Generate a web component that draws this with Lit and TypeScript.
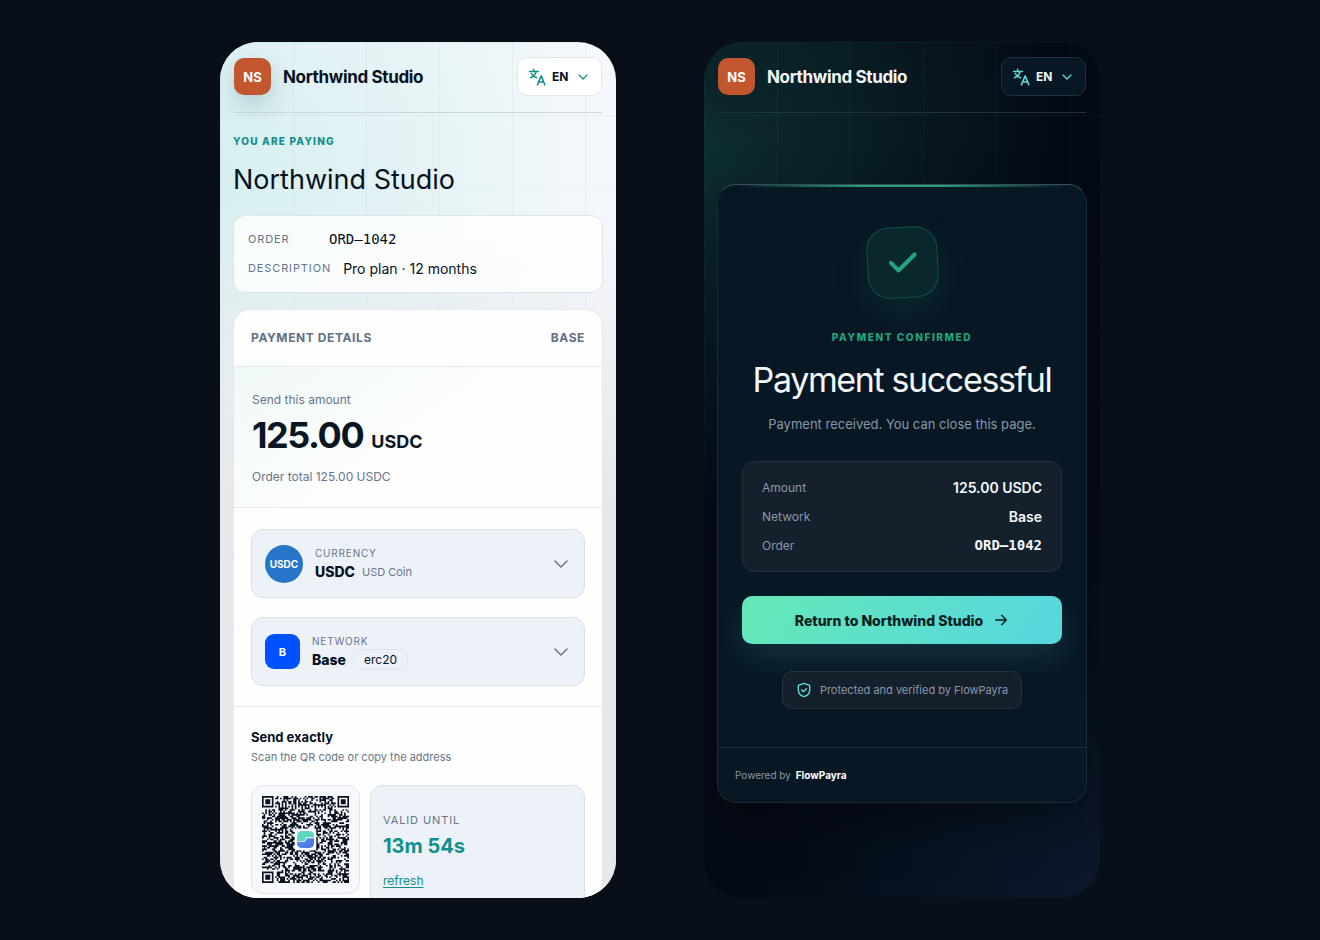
import { LitElement, html, css, svg } from "lit";
import { customElement, property } from "lit/decorators.js";

const shared = css`
  *,
  *::before,
  *::after {
    box-sizing: border-box;
  }
  h1,
  h2,
  p,
  dl,
  dd {
    margin: 0;
  }
  svg {
    display: block;
    flex: none;
  }
  button,
  select {
    font: inherit;
    color: inherit;
  }
`;

/** Faint square grid that fades out towards the lower half of a screen. */
const grid = css`
  :host {
    display: block;
    position: relative;
    isolation: isolate;
  }
  :host::before {
    content: "";
    position: absolute;
    inset: 0;
    z-index: -1;
    background:
      linear-gradient(90deg, transparent 72px, var(--grid) 72px) 1px 0 / 73px 73px,
      linear-gradient(transparent 72px, var(--grid) 72px) 0 1px / 73px 73px;
    mask-image: linear-gradient(#000, transparent 640px);
  }
`;

const chevron = (size: number, width: number) => html`
  <svg width=${size} height=${size} viewBox="0 0 24 24" fill="none" stroke="currentColor"
    stroke-width=${width} stroke-linecap="round" stroke-linejoin="round" aria-hidden="true">
    <path d="m4 8 8 8 8-8"></path>
  </svg>
`;

const QR_SIZE = 53;

/** Builds the dark modules of the payment code as one path. */
function qrPath(): string {
  const n = QR_SIZE;
  let seed = 104233;
  const next = () => {
    seed = (seed * 1103515245 + 12345) % 2147483648;
    return seed / 2147483648;
  };
  const finder = (x: number, y: number): boolean | null => {
    for (const [ox, oy] of [[0, 0], [n - 7, 0], [0, n - 7]]) {
      const dx = x - ox;
      const dy = y - oy;
      if (dx >= -1 && dx <= 7 && dy >= -1 && dy <= 7) {
        const d = Math.max(Math.abs(dx - 3), Math.abs(dy - 3));
        return d === 3 || d <= 1;
      }
    }
    return null;
  };
  let path = "";
  for (let y = 0; y < n; y++) {
    for (let x = 0; x < n; x++) {
      const fixed = finder(x, y);
      const dark = next() < 0.52;
      const centre = Math.max(Math.abs(x - 26), Math.abs(y - 26)) <= 6;
      const on = fixed ?? (x === 6 || y === 6 ? (x + y) % 2 === 0 : dark);
      if (on && !centre) path += `M${x} ${y}h1v1h-1z`;
    }
  }
  return path;
}

@customElement("pay-header")
export class PayHeader extends LitElement {
  static styles = [
    shared,
    css`
      :host {
        display: block;
        padding: 0 14px;
      }
      .bar {
        display: flex;
        align-items: center;
        padding: 15px 0 16px;
        border-bottom: 1px solid var(--rule);
      }
      .logo {
        display: grid;
        place-items: center;
        width: 37px;
        height: 37px;
        border-radius: 10px;
        background: #c2562f;
        color: #fff;
        font-size: 13px;
        font-weight: 700;
        box-shadow: 0 10px 24px var(--logo-shadow);
      }
      .name {
        margin-left: 12px;
        font-size: 17px;
        line-height: 24px;
        font-weight: 700;
        letter-spacing: -0.02em;
      }
      .lang {
        display: flex;
        align-items: center;
        height: 39px;
        margin-left: auto;
        padding: 0 12px 0 10px;
        border: 1px solid var(--control-border);
        border-radius: 10px;
        background: var(--control);
        color: var(--accent);
      }
      .lang select {
        width: 25px;
        margin-left: 6px;
        padding: 0;
        border: 0;
        background: none;
        appearance: none;
        color: var(--text);
        font-size: 12px;
        line-height: 18px;
        font-weight: 700;
      }
    `,
  ];

  render() {
    return html`
      <header class="bar">
        <span class="logo">NS</span>
        <span class="name">Northwind Studio</span>
        <label class="lang">
          <svg width="18" height="18" viewBox="0 0 24 24" fill="none" stroke="currentColor"
            stroke-width="2" stroke-linecap="round" stroke-linejoin="round" aria-hidden="true">
            <path d="M2 4.500h12M7.500 1.500v3M3.500 13c3.500-1.500 6.500-4.500 7.500-8.500M4.500 7.500c1.500 2.500 4 4.500 7 5.500"></path>
            <path d="m12.500 22.500 5-12 5 12M14.200 18.500h6.600"></path>
          </svg>
          <select aria-label="Language">
            <option>EN</option>
            <option>DE</option>
            <option>ES</option>
          </select>
          ${chevron(12, 2.4)}
        </label>
      </header>
    `;
  }
}

@customElement("pay-option")
export class PayOption extends LitElement {
  @property() label = "";
  @property() value = "";
  @property() badge = "";
  @property() kind = "coin";

  static styles = [
    shared,
    css`
      :host {
        display: block;
      }
      .option {
        display: flex;
        align-items: center;
        gap: 12px;
        width: 100%;
        min-height: 69px;
        padding: 0 14px 0 13px;
        border: 1px solid #d7e0e6;
        border-radius: 12px;
        background: #edf2f9;
        color: #68758b;
        text-align: left;
      }
      .mark {
        display: grid;
        place-items: center;
        flex: none;
        color: #fff;
        font-weight: 700;
      }
      .coin {
        width: 38px;
        height: 38px;
        border-radius: 50%;
        background: #2775ca;
        font-size: 10px;
      }
      .chain {
        width: 35px;
        height: 35px;
        border-radius: 9px;
        background: #0052ff;
        font-size: 11px;
      }
      .text {
        flex: 1;
      }
      .label {
        display: block;
        font-size: 10px;
        line-height: 16px;
        letter-spacing: 0.08em;
        text-transform: uppercase;
      }
      .row {
        display: flex;
        align-items: center;
        gap: 7px;
        height: 22px;
        font-size: 11px;
      }
      .value {
        color: #07111f;
        font-size: 14px;
        font-weight: 800;
      }
    `,
  ];

  render() {
    return html`
      <button class="option" type="button" aria-haspopup="listbox">
        <span class="mark ${this.kind}">${this.badge}</span>
        <span class="text">
          <span class="label">${this.label}</span>
          <span class="row"><span class="value">${this.value}</span><slot></slot></span>
        </span>
        ${chevron(18, 2)}
      </button>
    `;
  }
}

@customElement("pay-checkout")
export class PayCheckout extends LitElement {
  static styles = [
    shared,
    grid,
    css`
      :host {
        --text: #07111f;
        --accent: #108f8d;
        --rule: #ccd8dc;
        --control: #ffffff;
        --control-border: #dfe7eb;
        --logo-shadow: rgb(20 70 80 / 20%);
        --grid: rgb(60 90 120 / 5%);
        color: var(--text);
        background:
          linear-gradient(transparent 160px, #e7e8ec 460px),
          radial-gradient(400px 440px at 0 140px, #d6eff0, rgb(214 239 240 / 0%)),
          #f5f8fc;
      }
      .page {
        padding: 20px 13px;
      }
      .eyebrow {
        color: var(--accent);
        font-size: 10px;
        line-height: 16px;
        font-weight: 800;
        letter-spacing: 0.12em;
        text-transform: uppercase;
      }
      .title {
        margin-top: 13px;
        font-size: 27px;
        line-height: 36px;
        font-weight: 400;
      }
      .facts {
        margin-top: 17px;
        padding: 9px 14px;
        border: 1px solid #dce6ea;
        border-radius: 12px;
        background: rgb(255 255 255 / 80%);
      }
      .fact {
        display: flex;
        gap: 12px;
        line-height: 29px;
      }
      .fact dt {
        min-width: 69px;
        color: #68758b;
        font-size: 11px;
        letter-spacing: 0.08em;
        text-transform: uppercase;
      }
      .fact dd {
        font-size: 14px;
      }
      .fact .mono {
        font-family: "DejaVu Sans Mono", monospace;
      }
      .card {
        margin-top: 16px;
        border: 1px solid #e3e9ee;
        border-radius: 17px;
        background: #fefefe;
        overflow: hidden;
      }
      .head {
        display: flex;
        justify-content: space-between;
        padding: 19px 17px;
        border-bottom: 1px solid #e5eaee;
        color: #637087;
        font-size: 12px;
        line-height: 18px;
        font-weight: 700;
        letter-spacing: 0.05em;
        text-transform: uppercase;
      }
      .amount {
        padding: 23px 18px 20px;
        border-bottom: 1px solid #e5eaee;
        background: linear-gradient(145deg, #f0f9f8, #fefefe 55%);
        color: #68758b;
        font-size: 12px;
        line-height: 20px;
      }
      .sum {
        display: flex;
        align-items: baseline;
        gap: 8px;
        margin: 5px 0 12px;
        color: #0b1624;
        font-size: 36px;
        line-height: 40px;
        font-weight: 700;
        letter-spacing: -0.04em;
      }
      .unit {
        font-size: 18px;
        line-height: 20px;
        font-weight: 700;
        letter-spacing: 0;
      }
      .options {
        display: grid;
        gap: 19px;
        padding: 21px 17px 20px;
        border-bottom: 1px solid #e5eaee;
      }
      .tag {
        padding: 0 10px;
        border: 1px solid #dfe5ec;
        border-radius: 10px;
        color: #07111f;
        font-size: 12px;
        line-height: 19px;
      }
      .send {
        padding: 20px 17px;
      }
      .send h2 {
        font-size: 13px;
        line-height: 20px;
        font-weight: 700;
      }
      .hint {
        color: #68758b;
        font-size: 11px;
        line-height: 20px;
      }
      .transfer {
        display: flex;
        gap: 10px;
        margin-top: 18px;
      }
      .qr {
        align-self: flex-start;
        padding: 10px;
        border: 1px solid #dfe5eb;
        border-radius: 12px;
        background: #f6f8fb;
      }
      .valid {
        flex: 1;
        padding: 25px 12px 28px;
        border: 1px solid #d7e0e6;
        border-radius: 12px;
        background: #edf2f9;
        color: #68758b;
      }
      .valid .label {
        font-size: 11px;
        line-height: 18px;
        letter-spacing: 0.08em;
        text-transform: uppercase;
      }
      .time {
        margin: 3px 0 11px;
        color: var(--accent);
        font-size: 20px;
        line-height: 28px;
        font-weight: 700;
      }
      .refresh {
        display: block;
        width: fit-content;
        color: var(--accent);
        font-size: 12px;
        line-height: 20px;
        text-underline-offset: 2px;
      }
    `,
  ];

  render() {
    return html`
      <pay-header></pay-header>
      <main class="page">
        <p class="eyebrow">You are paying</p>
        <h1 class="title">Northwind Studio</h1>
        <dl class="facts">
          <div class="fact"><dt>Order</dt><dd class="mono">ORD–1042</dd></div>
          <div class="fact"><dt>Description</dt><dd>Pro plan · 12 months</dd></div>
        </dl>
        <section class="card">
          <div class="head"><span>Payment details</span><span>Base</span></div>
          <div class="amount">
            <p>Send this amount</p>
            <p class="sum">125.00 <span class="unit">USDC</span></p>
            <p>Order total 125.00 USDC</p>
          </div>
          <div class="options">
            <pay-option label="Currency" value="USDC" badge="USDC" kind="coin">USD Coin</pay-option>
            <pay-option label="Network" value="Base" badge="B" kind="chain"><span class="tag">erc20</span></pay-option>
          </div>
          <div class="send">
            <h2>Send exactly</h2>
            <p class="hint">Scan the QR code or copy the address</p>
            <div class="transfer">
              <div class="qr">
                <svg width="87" height="87" viewBox="0 0 ${QR_SIZE} ${QR_SIZE}" role="img" aria-label="Payment QR code">
                  <defs>
                    <linearGradient id="mint" x1="0" y1="0" x2="1" y2="1">
                      <stop offset="0" stop-color="#5fdcb8"></stop>
                      <stop offset="1" stop-color="#56cfc6"></stop>
                    </linearGradient>
                    <linearGradient id="blue" x1="0" y1="0" x2="1" y2="1">
                      <stop offset="0" stop-color="#5a93ee"></stop>
                      <stop offset="1" stop-color="#4a70dc"></stop>
                    </linearGradient>
                  </defs>
                  ${svg`<path d=${qrPath()} fill="#0a1220"></path>`}
                  <rect x="20" y="20" width="13" height="13" rx="2" fill="#fff"></rect>
                  <path fill="url(#mint)" d="M24.500 21.300H28.500q3.200 0 3.200 3.200v.7h-4.200q-1.200 0-1.200 1.100t-1.200 1.100h-3.800v-2.900q0-3.200 3.200-3.200z"></path>
                  <path fill="url(#blue)" d="M31.700 25.700v2.800q0 3.200-3.200 3.200h-4q-3.200 0-3.200-3.200v-.6h4.200q1.200 0 1.200-1.100t1.200-1.100z"></path>
                </svg>
              </div>
              <div class="valid">
                <p class="label">Valid until</p>
                <p class="time">13m 54s</p>
                <a class="refresh" href="#refresh">refresh</a>
              </div>
            </div>
          </div>
        </section>
      </main>
    `;
  }
}

@customElement("pay-success")
export class PaySuccess extends LitElement {
  static styles = [
    shared,
    grid,
    css`
      :host {
        --text: #f4f8fc;
        --accent: #5fdcd8;
        --rule: #1f3239;
        --control: #081724;
        --control-border: #22303c;
        --logo-shadow: rgb(0 0 0 / 14%);
        --grid: rgb(130 180 200 / 5%);
        color: var(--text);
        background:
          radial-gradient(360px 380px at 0 110px, #0d2d31, rgb(13 45 49 / 0%)),
          radial-gradient(360px 420px at 100% 100%, #0c182c, rgb(12 24 44 / 0%)),
          #040a15;
      }
      .page {
        padding: 71px 13px 0;
      }
      .card {
        position: relative;
        border: 1px solid #1c2a36;
        border-top-color: #3d4f58;
        border-radius: 19px;
        background: #081724;
        box-shadow: 0 20px 50px rgb(0 0 0 / 35%);
        overflow: hidden;
      }
      .glow {
        position: absolute;
        inset: 0 0 auto;
        height: 2px;
        background: linear-gradient(90deg, transparent 4%, #27a17c 40%, #27a17c 60%, transparent 96%);
      }
      .body {
        padding: 42px 24px 38px;
        text-align: center;
      }
      .check {
        display: grid;
        place-items: center;
        width: 71px;
        height: 71px;
        margin: 0 auto;
        border: 1px solid #12504a;
        border-radius: 22px;
        background: #09272c;
        color: #22a57f;
        box-shadow: 0 14px 36px rgb(30 165 127 / 12%);
        transform: rotate(-3deg);
      }
      .check svg {
        transform: rotate(3deg);
      }
      .eyebrow {
        margin-top: 31px;
        color: #22a57f;
        font-size: 10px;
        line-height: 16px;
        font-weight: 800;
        letter-spacing: 0.16em;
        text-transform: uppercase;
      }
      .title {
        margin-top: 13px;
        font-size: 34px;
        line-height: 44px;
        font-weight: 400;
        letter-spacing: -0.04em;
      }
      .note {
        margin-top: 12px;
        color: #8a97a8;
        font-size: 13px;
        line-height: 20px;
      }
      .summary {
        margin-top: 27px;
        padding: 11px 19px;
        border: 1px solid #23303c;
        border-radius: 12px;
        background: #15202d;
      }
      .line {
        display: flex;
        justify-content: space-between;
        line-height: 29px;
      }
      .line dt {
        color: #8a97a8;
        font-size: 12px;
      }
      .line dd {
        font-size: 14px;
        font-weight: 600;
      }
      .line .mono {
        font-family: "DejaVu Sans Mono", monospace;
        font-weight: 700;
      }
      .return {
        display: flex;
        align-items: center;
        justify-content: center;
        gap: 10px;
        height: 48px;
        margin-top: 24px;
        border-radius: 10px;
        background: linear-gradient(120deg, #65e8b8, #57d6de);
        color: #05201f;
        font-size: 14px;
        font-weight: 800;
        text-decoration: none;
        box-shadow: 0 14px 32px rgb(80 214 210 / 14%);
      }
      .shield {
        display: inline-flex;
        align-items: center;
        gap: 8px;
        height: 38px;
        margin-top: 27px;
        padding: 0 13px;
        border: 1px solid #26333f;
        border-radius: 10px;
        background: #15202d;
        color: #8a97a8;
        font-size: 11px;
        vertical-align: top;
      }
      .shield svg {
        color: var(--accent);
      }
      .foot {
        padding: 18px 17px;
        border-top: 1px solid #1c2c38;
        color: #8a97a8;
        font-size: 10px;
        line-height: 18px;
      }
      .foot b {
        margin-left: 2px;
        color: #fff;
        font-weight: 700;
      }
    `,
  ];

  render() {
    return html`
      <pay-header></pay-header>
      <main class="page">
        <section class="card">
          <div class="glow"></div>
          <div class="body">
            <div class="check">
              <svg width="36" height="36" viewBox="0 0 36 36" fill="none" stroke="currentColor"
                stroke-width="4" stroke-linecap="round" stroke-linejoin="round" aria-hidden="true">
                <path d="m6 18 7.500 7.500 16-16"></path>
              </svg>
            </div>
            <p class="eyebrow">Payment confirmed</p>
            <h1 class="title">Payment successful</h1>
            <p class="note">Payment received. You can close this page.</p>
            <dl class="summary">
              <div class="line"><dt>Amount</dt><dd>125.00 USDC</dd></div>
              <div class="line"><dt>Network</dt><dd>Base</dd></div>
              <div class="line"><dt>Order</dt><dd class="mono">ORD–1042</dd></div>
            </dl>
            <a class="return" href="#return">
              Return to Northwind Studio
              <svg width="16" height="16" viewBox="0 0 24 24" fill="none" stroke="currentColor"
                stroke-width="2" stroke-linecap="round" stroke-linejoin="round" aria-hidden="true">
                <path d="M4 12h16M13 5l7 7-7 7"></path>
              </svg>
            </a>
            <span class="shield">
              <svg width="16" height="16" viewBox="0 0 24 24" fill="none" stroke="currentColor"
                stroke-width="2" stroke-linecap="round" stroke-linejoin="round" aria-hidden="true">
                <path d="M12 2 3.500 5v7c0 5 3.500 8.500 8.500 10 5-1.500 8.500-5 8.500-10V5z"></path>
                <path d="m8.500 12 2.500 2.500 4.500-4.500"></path>
              </svg>
              Protected and verified by FlowPayra
            </span>
          </div>
          <footer class="foot">Powered by <b>FlowPayra</b></footer>
        </section>
      </main>
    `;
  }
}

@customElement("app-root")
export class AppRoot extends LitElement {
  static styles = [
    shared,
    css`
      :host {
        display: block;
        font-family: Inter, "Liberation Sans", sans-serif;
      }
      .stage {
        display: flex;
        justify-content: center;
        gap: 88px;
        min-height: 100vh;
        padding: 42px;
        background: #080f18;
      }
      .phone {
        flex: 0 1 396px;
        height: calc(100vh - 84px);
        border-radius: 38px;
        overflow: hidden;
      }
      .phone > * {
        min-height: 100%;
      }
    `,
  ];

  render() {
    return html`
      <div class="stage">
        <div class="phone"><pay-checkout></pay-checkout></div>
        <div class="phone"><pay-success></pay-success></div>
      </div>
    `;
  }
}
